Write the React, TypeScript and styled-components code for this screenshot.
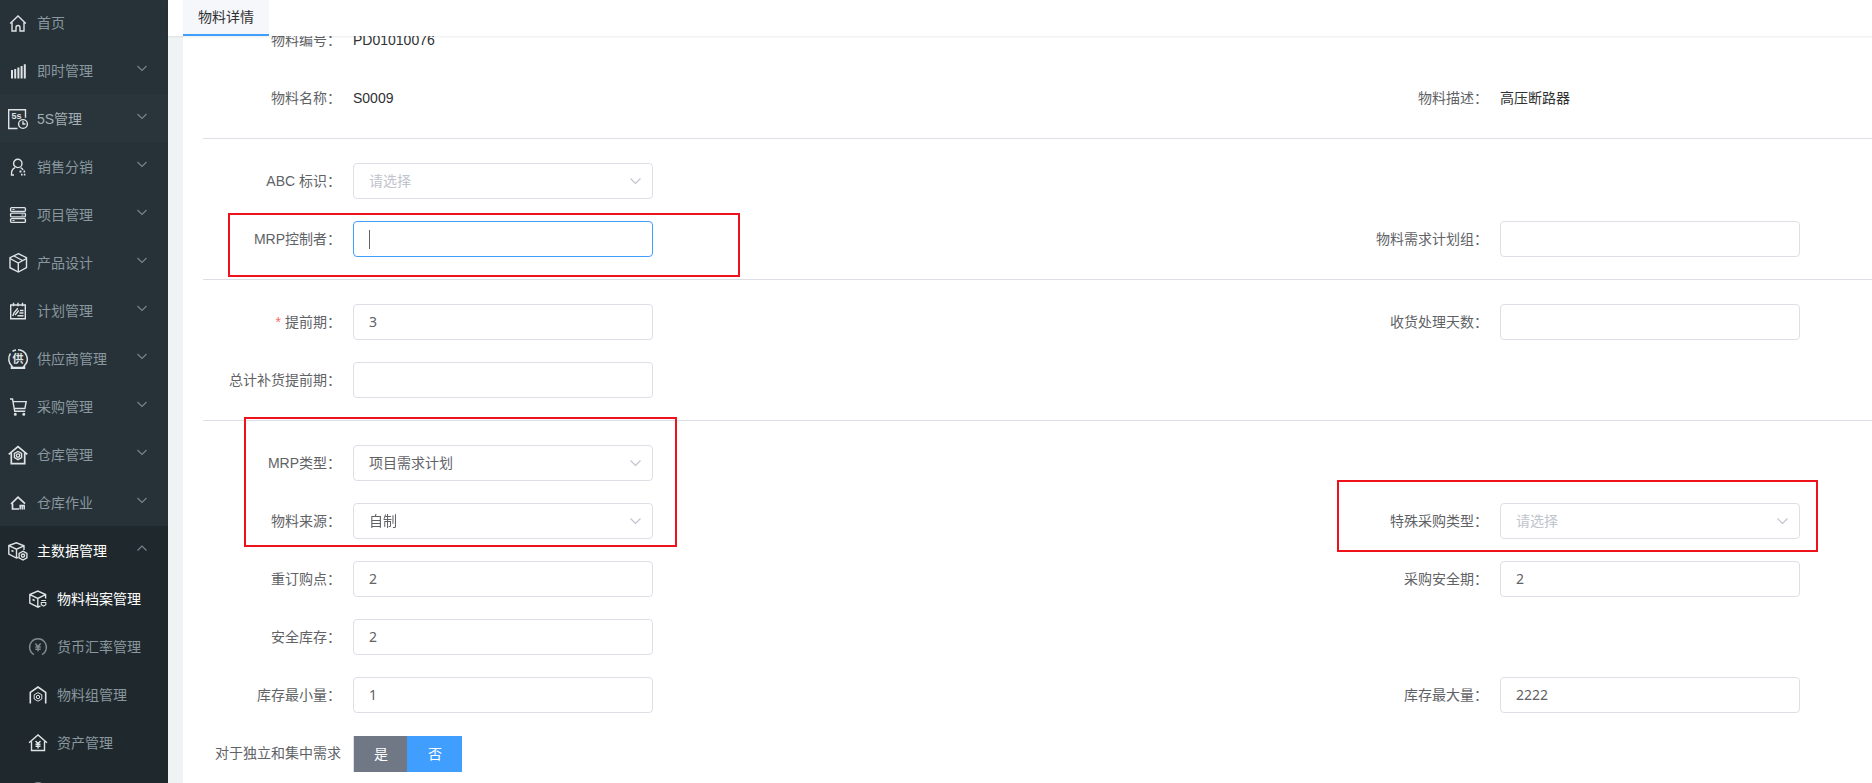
import React from "react";
import styled, { createGlobalStyle, css } from "styled-components";

const GlobalStyle = createGlobalStyle`
  *, *::before, *::after { box-sizing: border-box; }
  html, body { margin: 0; padding: 0; }
  body {
    font-family: "Liberation Sans", "Noto Sans CJK SC", sans-serif;
    font-size: 14px;
    color: #303133;
    background: #fff;
  }
`;

const Layout = styled.div`
  display: flex;
  height: 100vh;
  overflow: hidden;
`;

/* ---------- sidebar ---------- */

const Sidebar = styled.nav`
  flex: 0 0 168px;
  overflow: hidden;
  background: #263238;
`;

const Menu = styled.ul`
  list-style: none;
  margin: -2px 0 0;
  padding: 0;
`;

const SubMenu = styled.ul`
  list-style: none;
  margin: 0;
  padding: 0;
`;

const MenuGroup = styled.li<{ $open?: boolean }>`
  background: ${(p) => (p.$open ? "#1f292d" : "transparent")};
`;

const MenuLink = styled.a<{ $active?: boolean; $hover?: boolean; $level?: number }>`
  display: flex;
  align-items: center;
  height: 48px;
  padding: 0 20px 0 ${(p) => (p.$level === 2 ? 28 : 8)}px;
  color: ${(p) => (p.$active ? "#ffffff" : p.$hover ? "#a3adb2" : "#8a979e")};
  background: ${(p) => (p.$hover ? "#29353a" : "transparent")};
  text-decoration: none;
  white-space: nowrap;
`;

const MenuText = styled.span`
  flex: 1;
  margin-left: 9px;
`;

const MenuIcon = styled.svg<{ $dim?: boolean }>`
  flex: none;
  width: 20px;
  height: 20px;
  margin-top: 2px;
  overflow: visible;
  fill: none;
  stroke: ${(p) => (p.$dim ? "#808a8f" : "#e0e3e5")};
  stroke-width: 1.4;

  text {
    stroke: none;
    fill: #e0e3e5;
  }
`;

const MenuArrow = styled.svg`
  flex: none;
  width: 12px;
  height: 12px;
  margin-bottom: 4px;
  fill: none;
  stroke: #79868d;
  stroke-width: 1.1;
`;

/* ---------- main area ---------- */

const Main = styled.main`
  flex: 1;
  min-width: 0;
  display: flex;
  flex-direction: column;
`;

const TabBar = styled.div`
  flex: none;
  display: flex;
  height: 36px;
  padding-left: 15px;
  background: #fff;
  box-shadow: 0 1px 2px rgba(0, 0, 0, 0.08);
  z-index: 1;
`;

const Tab = styled.button`
  height: 36px;
  padding: 0 15px 2px;
  border: 0;
  border-bottom: 2px solid #409eff;
  background: #f5f7fb;
  color: #303133;
  font: inherit;
`;

const Workspace = styled.div`
  flex: 1;
  min-height: 0;
  padding-left: 15px;
  background: #eff3f4;
  overflow: hidden;
`;

const Panel = styled.section`
  display: flow-root;
  min-height: 100%;
  padding-left: 20px;
  background: #fff;
`;

/* The form is shown slightly scrolled beneath the tab bar. */
const Form = styled.form`
  margin-top: -14px;
`;

const Section = styled.div`
  & + & {
    border-top: 1px solid #dcdfe6;
    padding-top: 24px;
  }
`;

const Row = styled.div`
  display: grid;
  grid-template-columns: 1fr 522px;
  height: 36px;
  margin-bottom: 22px;
`;

const Field = styled.div`
  position: relative;
  grid-column: 1;
  display: flex;
  align-items: center;

  & + & {
    grid-column: 2;
  }
`;

const labelText = css`
  flex: 0 0 150px;
  padding-right: 12px;
  color: #606266;
  line-height: 36px;
  text-align: right;
  white-space: nowrap;
`;

const Label = styled.label<{ $required?: boolean }>`
  ${labelText}

  ${(p) =>
    p.$required &&
    css`
      &::before {
        content: "*";
        margin-right: 4px;
        color: #f56c6c;
      }
    `}
`;

const Caption = styled.span`
  ${labelText}
`;

const StaticText = styled.span`
  line-height: 36px;
`;

const controlStyle = css`
  width: 300px;
  height: 36px;
  margin: 0;
  padding: 0 15px 2px;
  border: 1px solid #dcdfe6;
  border-radius: 4px;
  outline: none;
  background: #fff;
  color: #606266;
  font-family: "Noto Sans", "Noto Sans CJK SC", sans-serif;
  font-size: 14px;

  &:focus {
    border-color: #409eff;
  }
`;

const TextInput = styled.input`
  ${controlStyle}
  caret-color: transparent;
`;

const Caret = styled.span`
  position: absolute;
  left: 166px;
  top: 9px;
  width: 1px;
  height: 19px;
  background: #606266;
`;

const SelectWrap = styled.div`
  position: relative;
  width: 300px;
  height: 36px;
`;

const SelectBox = styled.select<{ $empty: boolean }>`
  ${controlStyle}
  appearance: none;
  color: ${(p) => (p.$empty ? "#c0c4cc" : "#606266")};
`;

const SelectArrow = styled.svg`
  position: absolute;
  right: 11px;
  top: 12px;
  width: 13px;
  height: 12px;
  fill: none;
  stroke: #c0c4cc;
  stroke-width: 1.2;
  pointer-events: none;
`;

const RadioGroup = styled.div`
  display: flex;
  height: 36px;
  padding-top: 1px;
`;

const RadioInput = styled.input`
  position: absolute;
  opacity: 0;
  margin: 0;
`;

const RadioButton = styled.label<{ $on?: boolean }>`
  height: 36px;
  padding: 0 20px;
  border-left: 1px solid ${(p) => (p.$on ? "#409eff" : "#dcdfe6")};
  background: ${(p) => (p.$on ? "#409eff" : "#707785")};
  color: #fff;
  line-height: 36px;

  & + & {
    margin-left: -1px;
  }
`;

/* Red callout frame laid over a part of the form. */
const Callout = styled.div<{ $x: number; $y: number; $w: number; $h: number }>`
  position: absolute;
  z-index: 2;
  left: ${(p) => p.$x}px;
  top: ${(p) => p.$y}px;
  width: ${(p) => p.$w}px;
  height: ${(p) => p.$h}px;
  border: 2px solid #ed121b;
  pointer-events: none;
`;

/* ---------- menu data ---------- */

const icons: Record<string, React.ReactNode> = {
  home: <path d="M2.2 10.5 10 3l7.8 7.5M4 9v9h4v-3.5a2 2 0 0 1 4 0V18h4V9" />,
  bars: <path strokeWidth="2" d="M4 17.5V9M7.2 17.5V8M10.4 17.5V6.5M13.6 17.5V5M16.8 17.5V3.2" />,
  fiveS: (
    <>
      <path d="M9.5 19.5H.7V.7h16.8v8" />
      <text x="3.4" y="10.2" fontSize="9" fontWeight="700">5s</text>
      <circle cx="15" cy="15" r="4.4" />
      <path d="M15 12.3V15h2.4" />
    </>
  ),
  person: (
    <>
      <circle cx="9.8" cy="6.4" r="4.2" />
      <path d="M6 18H3.5c-.3-3.6.7-6 3.500-7.300M12.500 10.700c1.200.5 2 1.300 2.600 2.300" />
      <path strokeWidth="1.800" d="M11.500 14.500h2M15.500 14.500h1.600M13 17.600h1.600M15.800 17.600h1.600" />
    </>
  ),
  server: (
    <>
      <rect x="2.600" y="2.600" width="14.800" height="3.800" rx="1" />
      <rect x="2.600" y="8.100" width="14.800" height="3.800" rx="1" />
      <rect x="2.600" y="13.600" width="14.800" height="3.800" rx="1" />
      <path strokeWidth="1" d="M4.500 4.500h2M13.500 10h2M4.500 15.500h2" />
    </>
  ),
  cube: (
    <>
      <path d="M10.300.7 18.500 4.700v10L10.300 19 2 14.700v-10z" />
      <path d="M2 5.500 10.300 10l8.200-4.500M10.300 10v9M6 3l8.500 4.500" />
    </>
  ),
  plan: (
    <>
      <path d="M2.700 4h14.600v13.800H2.700zM5.500 1.800v3.500M10 1.800v3.500M14.500 1.800v3.500" />
      <path d="M4.800 15 6 11.800l3.800-4.500M7 14l3.800-4.500M12 9.500h3.500M11.500 12h4M9.500 14.800h6" />
    </>
  ),
  supplier: (
    <>
      <path strokeWidth="1.500" d="M4 17a9.300 9.300 0 0 1-1.500-12.500M4.500 2.400A9.300 9.300 0 0 1 8 .9M10 .7a9.300 9.300 0 0 1 6 16.300M3.500 19.300V17l2 1.500h9l2-1.500v2.300z" />
      <text x="4.500" y="13.800" fontSize="11" fontWeight="700">供</text>
    </>
  ),
  cart: (
    <>
      <path d="M2 2h2.500l2.200 12.300h10.500M5.200 4.600h13l-1.300 6.900H6.400" />
      <circle cx="7.300" cy="17.300" r=".8" />
      <circle cx="15.800" cy="17.300" r=".8" />
    </>
  ),
  warehouse: (
    <>
      <path strokeWidth="1.700" d="M.7 9.300 10 1.500l9.300 7.800M3.300 8v10.600h13.400V8" />
      <path d="M10 6.500l3.600 2v4.200l-3.600 2-3.600-2V8.500z" />
      <circle cx="10" cy="10.600" r="1.700" />
    </>
  ),
  work: (
    <>
      <path strokeWidth="1.700" d="M3 11 10 4.200l7 6.500M4.500 10.500V16H11" />
      <path strokeWidth="1.500" d="M12.200 16.500V12.500h4v4M14.200 12.500v4" />
    </>
  ),
  master: (
    <>
      <path d="M10.500 16.300 8.500 17 .8 13V4.500L8.300 1.800l7.700 3V9M.8 4.700l7.700 3.500L16 4.900M8.500 8.200V17M3.500 9.500l2 1" />
      <path d="M15 10.200l3.900 2.200v4.400L15 19l-3.900-2.200v-4.400z" />
      <circle cx="15" cy="14.600" r="1.600" />
    </>
  ),
  archive: (
    <>
      <path d="M12.500 16.800 10 18.200 1.800 14V5.500L9.800 2l7.800 3.500V9.500M1.800 5.700 9.800 9.500l7.800-3.800M9.800 9.500v8.500M4.500 10.500l2.200 1" />
      <path strokeWidth="1.100" d="M13.300 11.500h4.500M13.300 13.500h4.500v2.300l-2.200 1.300-2.300-1.300z" />
    </>
  ),
  currency: (
    <path d="M6 17.600A8.400 8.400 0 1 1 14 17.600M7.300 6.500 10 9.500l2.700-3M10 9.500v5M7.300 10h5.400M7.300 12.300h5.400" />
  ),
  group: (
    <>
      <path strokeWidth="1.600" d="M2.300 18.500V7.300L10 2l7.700 5.300v11.200" />
      <path strokeWidth="1" d="M10 7.600l3.800 2.200v4.200L10 16.200 6.200 14V9.800z" />
      <circle cx="10" cy="12" r="1.700" strokeWidth="1" />
    </>
  ),
  asset: (
    <path d="M1 9.700 10 2l9 7.700M3.500 8.500v9h13v-9M7.500 8 10 10.500 12.500 8M10 10.500v5M7.500 11.200h5M7.500 13.200h5" />
  ),
  round: <circle cx="10" cy="9.800" r="8" />,
};

type Item = { text: string; icon: string; dim?: boolean; active?: boolean };

const topItems: Item[] = [
  { text: "即时管理", icon: "bars" },
  { text: "5S管理", icon: "fiveS" },
  { text: "销售分销", icon: "person" },
  { text: "项目管理", icon: "server" },
  { text: "产品设计", icon: "cube" },
  { text: "计划管理", icon: "plan" },
  { text: "供应商管理", icon: "supplier" },
  { text: "采购管理", icon: "cart" },
  { text: "仓库管理", icon: "warehouse" },
  { text: "仓库作业", icon: "work" },
];

const subItems: Item[] = [
  { text: "物料档案管理", icon: "archive", active: true },
  { text: "货币汇率管理", icon: "currency", dim: true },
  { text: "物料组管理", icon: "group" },
  { text: "资产管理", icon: "asset" },
];

const Icon = ({ name, dim }: { name: string; dim?: boolean }) => (
  <MenuIcon viewBox="0 0 20 20" $dim={dim} aria-hidden="true">
    {icons[name]}
  </MenuIcon>
);

const Arrow = ({ up }: { up?: boolean }) => (
  <MenuArrow viewBox="0 0 12 12" aria-hidden="true">
    <path d={up ? "M1.500 8.500 6 4l4.500 4.500" : "M1.500 4 6 8.500 10.500 4"} />
  </MenuArrow>
);

/* ---------- form parts ---------- */

type InputProps = {
  id: string;
  label: string;
  value?: string;
  required?: boolean;
  focused?: boolean;
  children?: React.ReactNode;
};

const InputField = ({ id, label, value = "", required, focused, children }: InputProps) => (
  <Field>
    <Label htmlFor={id} $required={required}>{label}</Label>
    <TextInput id={id} type="text" defaultValue={value} autoFocus={focused} />
    {focused && <Caret />}
    {children}
  </Field>
);

type SelectProps = { id: string; label: string; value?: string; children?: React.ReactNode };

const SelectField = ({ id, label, value, children }: SelectProps) => (
  <Field>
    <Label htmlFor={id}>{label}</Label>
    <SelectWrap>
      <SelectBox id={id} $empty={!value}>
        <option>{value ?? "请选择"}</option>
      </SelectBox>
      <SelectArrow viewBox="0 0 13 12" aria-hidden="true">
        <path d="M1.500 3.500l5 5 5-5" />
      </SelectArrow>
    </SelectWrap>
    {children}
  </Field>
);

const StaticField = ({ label, value }: { label: string; value: string }) => (
  <Field>
    <Caption>{label}</Caption>
    <StaticText>{value}</StaticText>
  </Field>
);

export default function App() {
  return (
    <>
      <GlobalStyle />
      <Layout>
        <Sidebar>
          <Menu>
            <MenuGroup>
              <MenuLink href="#">
                <Icon name="home" />
                <MenuText>首页</MenuText>
              </MenuLink>
            </MenuGroup>
            {topItems.map((item) => (
              <MenuGroup key={item.text}>
                <MenuLink href="#" $hover={item.icon === "fiveS"}>
                  <Icon name={item.icon} />
                  <MenuText>{item.text}</MenuText>
                  <Arrow />
                </MenuLink>
              </MenuGroup>
            ))}
            <MenuGroup $open>
              <MenuLink href="#" $active>
                <Icon name="master" />
                <MenuText>主数据管理</MenuText>
                <Arrow up />
              </MenuLink>
              <SubMenu>
                {subItems.map((item) => (
                  <li key={item.text}>
                    <MenuLink href="#" $level={2} $active={item.active}>
                      <Icon name={item.icon} dim={item.dim} />
                      <MenuText>{item.text}</MenuText>
                    </MenuLink>
                  </li>
                ))}
                <li>
                  <MenuLink href="#" $level={2}>
                    <Icon name="round" dim />
                  </MenuLink>
                </li>
              </SubMenu>
            </MenuGroup>
          </Menu>
        </Sidebar>

        <Main>
          <TabBar>
            <Tab type="button">物料详情</Tab>
          </TabBar>
          <Workspace>
            <Panel>
              <Form>
                <Section>
                  <Row>
                    <StaticField label="物料编号：" value="PD01010076" />
                  </Row>
                  <Row>
                    <StaticField label="物料名称：" value="S0009" />
                    <StaticField label="物料描述：" value="高压断路器" />
                  </Row>
                </Section>
                <Section>
                  <Row>
                    <SelectField id="abc" label="ABC 标识：" />
                  </Row>
                  <Row>
                    <InputField id="mrp-controller" label="MRP控制者：" focused>
                      <Callout $x={25} $y={-8} $w={512} $h={64} />
                    </InputField>
                    <InputField id="mrp-group" label="物料需求计划组：" />
                  </Row>
                </Section>
                <Section>
                  <Row>
                    <InputField id="lead-time" label="提前期：" value="3" required />
                    <InputField id="receipt-days" label="收货处理天数：" />
                  </Row>
                  <Row>
                    <InputField id="total-lead-time" label="总计补货提前期：" />
                  </Row>
                </Section>
                <Section>
                  <Row>
                    <SelectField id="mrp-type" label="MRP类型：" value="项目需求计划">
                      <Callout $x={41} $y={-28} $w={433} $h={130} />
                    </SelectField>
                  </Row>
                  <Row>
                    <SelectField id="source" label="物料来源：" value="自制" />
                    <SelectField id="special-type" label="特殊采购类型：">
                      <Callout $x={-13} $y={-23} $w={481} $h={72} />
                    </SelectField>
                  </Row>
                  <Row>
                    <InputField id="reorder-point" label="重订购点：" value="2" />
                    <InputField id="safety-period" label="采购安全期：" value="2" />
                  </Row>
                  <Row>
                    <InputField id="safety-stock" label="安全库存：" value="2" />
                  </Row>
                  <Row>
                    <InputField id="stock-min" label="库存最小量：" value="1" />
                    <InputField id="stock-max" label="库存最大量：" value="2222" />
                  </Row>
                  <Row>
                    <Field role="radiogroup" aria-labelledby="demand-label">
                      <Caption id="demand-label">对于独立和集中需求</Caption>
                      <RadioGroup>
                        <RadioButton htmlFor="demand-yes">
                          <RadioInput id="demand-yes" type="radio" name="demand" />是
                        </RadioButton>
                        <RadioButton htmlFor="demand-no" $on>
                          <RadioInput id="demand-no" type="radio" name="demand" defaultChecked />否
                        </RadioButton>
                      </RadioGroup>
                    </Field>
                  </Row>
                </Section>
              </Form>
            </Panel>
          </Workspace>
        </Main>
      </Layout>
    </>
  );
}
